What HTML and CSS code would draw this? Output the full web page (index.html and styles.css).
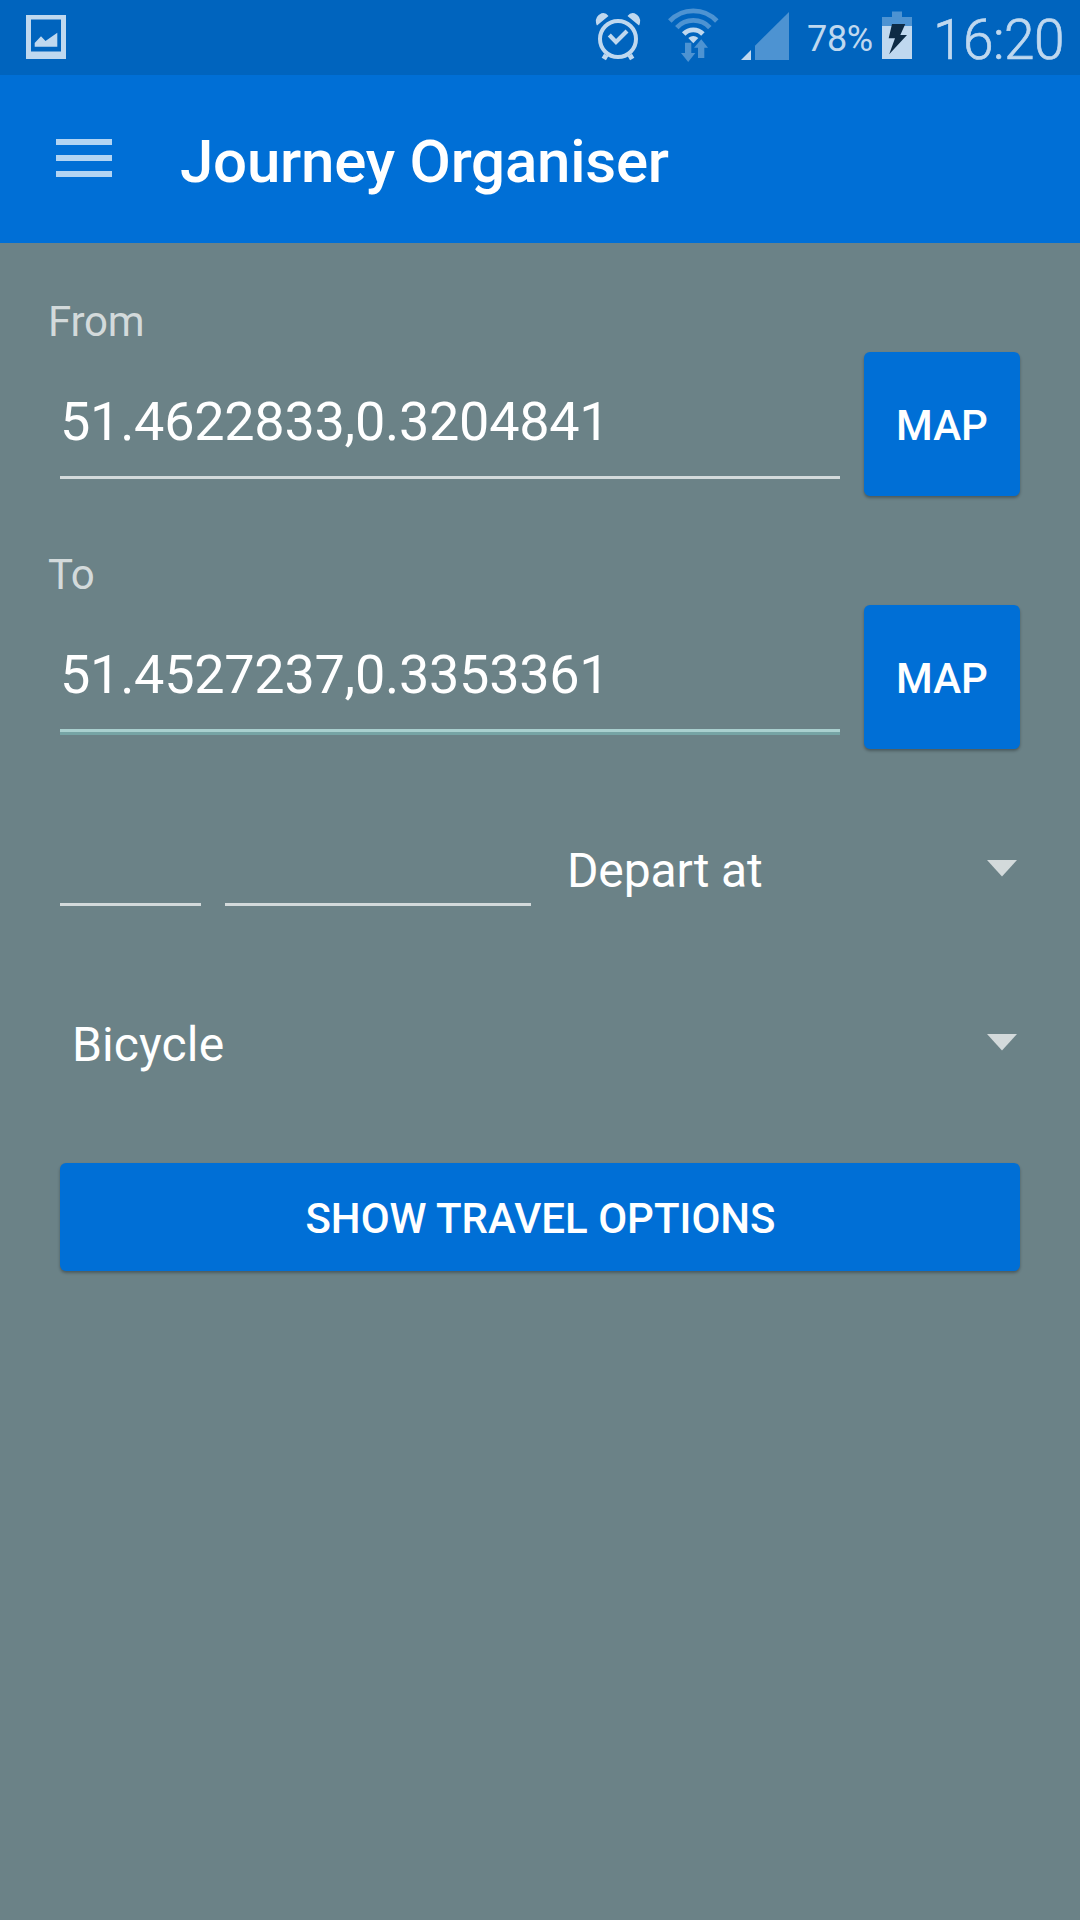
FILE: index.html
```html
<!DOCTYPE html>
<html lang="en">
<head>
<meta charset="utf-8">
<title>Journey Organiser</title>
<link rel="stylesheet" href="styles.css">
</head>
<body>
<div class="status">
  <svg class="picture" width="40" height="44" viewBox="26 15 40 44">
    <path class="soft" fill-rule="evenodd" d="M26 15H66V59H26ZM31 19.5V51.500H61V19.500Z"/>
    <path class="soft" d="M34.700 43L41 36.300L45.500 41L57.300 32.800V46.800H34.700Z"/>
  </svg>
  <div class="indicators">
    <svg width="48" height="75" viewBox="594 0 48 75">
      <circle class="line" cx="618" cy="39" r="18" stroke-width="4"/>
      <path class="line" stroke-width="4.200" d="M609.300 35L616 42L627 31"/>
      <path class="line" stroke-width="5" d="M606.200 55L603.800 59M629.800 55L632.200 59"/>
      <path class="soft" d="M597 25.500L608.500 16Q605.500 12 601.500 13.300Q595 16.500 596 22.500Q596.200 24.500 597 25.500ZM639 25.500L627.500 16Q630.500 12 634.500 13.300Q641 16.500 640 22.500Q639.800 24.500 639 25.500Z"/>
    </svg>
    <svg class="wifi" width="52" height="75" viewBox="667 0 52 75">
      <path class="faint-line" d="M669.800 21A32.200 32.200 0 0 1 716.800 21M676.800 27.600A22.600 22.600 0 0 1 709.800 27.600"/>
      <path class="line" stroke-width="4.800" d="M683.700 34A13.200 13.200 0 0 1 702.900 34"/>
      <path class="soft" d="M693.300 43.200L688.300 38Q693.300 33.800 698.300 38Z"/>
      <path class="faint" d="M685 42.700H691.300V53H695.300L688.200 62L681 53H685ZM701.300 39.300L708 47.700H704.300V58H698V47.700H694Z"/>
    </svg>
    <svg class="signal" width="49" height="75" viewBox="741 0 49 75">
      <path class="soft" d="M741 60H751V50Z"/>
      <path class="faint" d="M755 60V45.700L789 12V60Z"/>
    </svg>
    <span class="percent">78%</span>
    <svg width="30" height="75" viewBox="882 0 30 75">
      <path class="faint" d="M892 11.500H902V17H912V26H882V17H892Z"/>
      <path class="soft" d="M882 26H912V59H882Z"/>
      <path class="bolt" d="M892 24H905.300L900.300 35H907L889.200 54.300L895 38.300H888.700Z"/>
    </svg>
    <span class="clock">16:20</span>
  </div>
</div>
<header class="appbar">
  <div class="menu"><i></i><i></i><i></i></div>
  <h1 class="title">Journey Organiser</h1>
</header>
<main class="form">
  <div class="label">From</div>
  <div class="row">
    <div class="field">51.4622833,0.3204841</div>
    <button class="button map">MAP</button>
  </div>
  <div class="label next">To</div>
  <div class="row">
    <div class="field focused">51.4527237,0.3353361</div>
    <button class="button map">MAP</button>
  </div>
  <div class="when">
    <div class="blank hour"></div>
    <div class="blank date"></div>
    <div class="select depart">Depart at<svg class="arrow" width="30" height="17" viewBox="0 0 30 17"><path d="M0 0H30L15 16.500Z"/></svg></div>
  </div>
  <div class="select mode">Bicycle<svg class="arrow" width="30" height="17" viewBox="0 0 30 17"><path d="M0 0H30L15 16.500Z"/></svg></div>
  <button class="button wide">SHOW TRAVEL OPTIONS</button>
</main>
</body>
</html>
```
FILE: styles.css
```css
* { box-sizing: border-box; }
body {
  margin: 0;
  width: 1080px;
  height: 1920px;
  background: #6b8287;
  color: #fff;
  font-family: Roboto, sans-serif;
  overflow: hidden;
}
svg { display: block; flex: none; }
.status {
  height: 75px;
  background: #0064be;
  display: flex;
  justify-content: space-between;
  padding-left: 26px;
  color: #bfd8ef;
}
.picture { margin-top: 15px; }
.indicators { width: 486px; display: flex; }
.soft { fill: #bfd8ef; }
.faint { fill: #4d93d2; }
.line { fill: none; stroke: #bfd8ef; }
.faint-line { fill: none; stroke: #4d93d2; stroke-width: 4.8px; }
.bolt { fill: #0d2b45; }
.wifi { margin-left: 25px; }
.signal { margin-left: 22px; }
.percent {
  width: 75px;
  margin-left: 17px;
  font-size: 36px;
  letter-spacing: -0.3px;
  line-height: 78px;
}
.clock {
  margin-left: 21px;
  font-size: 55px;
  font-weight: 300;
  -webkit-text-stroke: 0.7px #bfd8ef;
  letter-spacing: -0.5px;
  line-height: 80px;
}
.appbar {
  height: 168px;
  background: #006fd6;
  display: flex;
  align-items: center;
  padding-left: 56px;
}
.menu {
  width: 56px;
  display: grid;
  gap: 10px;
  margin-bottom: 2px;
}
.menu i { height: 6px; background: #b2d4f3; }
.title {
  margin: 5px 0 0 68px;
  font-size: 60px;
  font-weight: 500;
  letter-spacing: -0.23px;
  line-height: 80px;
}
.form { padding: 54px 60px 0; }
.label {
  margin: 0 0 5px -12px;
  font-size: 42px;
  letter-spacing: -0.25px;
  line-height: 50px;
  color: #d3dadb;
}
.next { margin-top: 54px; }
.row {
  display: flex;
  height: 144px;
  justify-content: space-between;
}
.field {
  width: 780px;
  height: 127px;
  padding-top: 15px;
  border-bottom: 3px solid #d3dadb;
  font-size: 54px;
  letter-spacing: -0.28px;
  line-height: 109px;
}
.focused {
  border-color: #a9d0cf;
  box-shadow: 0 3px #76a4a5;
}
.button {
  border: 0;
  border-radius: 6px;
  padding: 3px 0 0;
  background: #006fd6;
  color: #fff;
  font: 500 42px/50px Roboto, sans-serif;
  box-shadow: 0 2px 3px rgba(0, 0, 0, 0.3);
}
.map { width: 156px; }
.when {
  display: flex;
  gap: 24px;
  height: 71px;
  margin-top: 86px;
}
.blank { border-bottom: 3px solid #d3dadb; }
.hour { width: 141px; }
.date { width: 306px; }
.select {
  flex: 1;
  display: flex;
  align-items: center;
  justify-content: space-between;
  padding: 0 3px 0 12px;
  font-size: 48px;
  line-height: 71px;
}
.depart { letter-spacing: -0.15px; }
.arrow { fill: #d3dadb; margin-bottom: 4px; }
.mode { margin-top: 103px; height: 71px; letter-spacing: 0.12px; }
.wide {
  display: block;
  width: 960px;
  height: 108px;
  margin-top: 83px;
  padding-left: 1px;
}
```
